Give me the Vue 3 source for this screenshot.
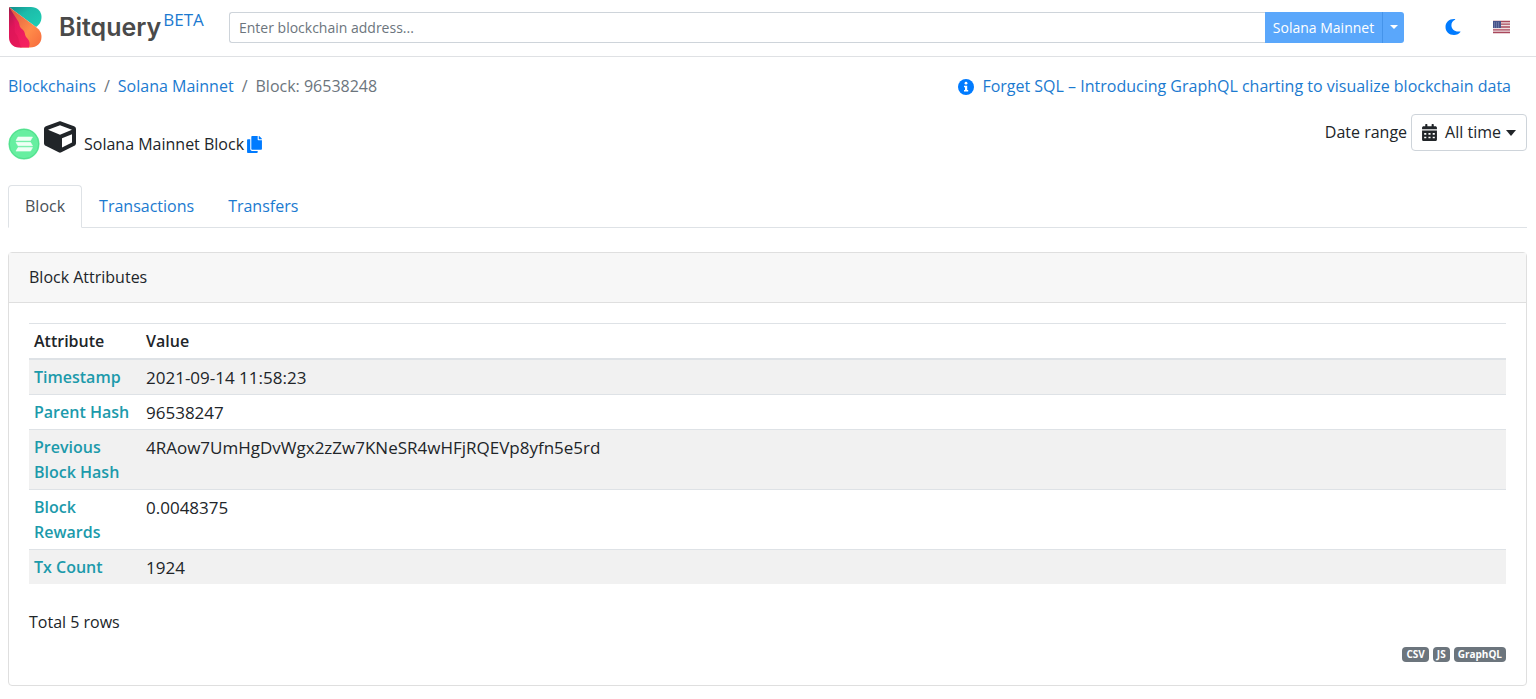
<script setup>
import { ref } from 'vue'

const query = ref('')
const tabs = ['Block', 'Transactions', 'Transfers']
const activeTab = ref('Block')
const rows = [
  { name: 'Timestamp', value: '2021-09-14 11:58:23' },
  { name: 'Parent Hash', value: '96538247' },
  { name: 'Previous Block Hash', value: '4RAow7UmHgDvWgx2zZw7KNeSR4wHFjRQEVp8yfn5e5rd' },
  { name: 'Block Rewards', value: '0.0048375' },
  { name: 'Tx Count', value: '1924' },
]
const formats = ['CSV', 'JS', 'GraphQL']
</script>

<template>
  <div class="page">
    <header class="topbar">
      <a class="brand" href="#" aria-label="Bitquery beta">
        <svg class="logo" viewBox="0 0 34 42" aria-hidden="true">
          <defs>
            <linearGradient id="teal" x1="0" y1="0" x2="1" y2="1">
              <stop offset="0" stop-color="#138c8c" />
              <stop offset="0.4" stop-color="#1cbcaa" />
              <stop offset="1" stop-color="#1fd0b4" />
            </linearGradient>
            <linearGradient id="orange" x1="0" y1="0" x2="1" y2="1">
              <stop offset="0" stop-color="#d9543f" />
              <stop offset="0.6" stop-color="#ff8c4a" />
              <stop offset="1" stop-color="#f76a3c" />
            </linearGradient>
            <linearGradient id="pink" x1="0" y1="0" x2="0.7" y2="1">
              <stop offset="0" stop-color="#8e1f48" />
              <stop offset="0.4" stop-color="#e3185e" />
              <stop offset="1" stop-color="#f5205f" />
            </linearGradient>
          </defs>
          <path d="M1 1H23C29 1 33.500 5 33.500 11C33.500 16 31 19 28 21L1 1Z" fill="url(#teal)" />
          <path d="M1 1L28 21C32 24 33.500 27 33.500 31C33.500 37 29 41.500 22 41.500H12L1 1Z" fill="url(#orange)" />
          <path d="M1 1L10 15C12 18 11 21 14 23C18 26 16 29 19 32C22 35 22 38 21 41.500H11C5 41.500 1 37 1 31Z" fill="url(#pink)" />
          <path d="M1 4L6 16C8 21 5 24 8 28C12 33 10 37 14 41.500H11C5 41.500 1 37 1 31Z" fill="#d3104f" opacity="0.35" />
        </svg>
        <span class="brand-name">Bitquery</span>
        <span class="beta">BETA</span>
      </a>
      <form class="search" @submit.prevent>
        <input v-model="query" type="text" aria-label="Blockchain address" placeholder="Enter blockchain address..." />
        <button class="network" type="submit">Solana Mainnet</button>
        <button class="network-toggle" type="button" aria-label="Choose network"><span class="caret"></span></button>
      </form>
      <button class="icon-button" type="button" aria-label="Dark mode">
        <svg width="16" height="18" viewBox="0 0 16 18" aria-hidden="true">
          <path d="M9 1C4 1 0.500 4.500 0.500 9S4 17 9 17C11.800 17 14 15.900 15.400 14C15.700 13.600 15.300 13.300 14.900 13.400C10 14.300 6.400 11.200 6.400 7.300C6.400 4.800 7.700 2.800 9.900 1.700C10.400 1.400 10.300 1.100 9.900 1Z" fill="#007bff" />
        </svg>
      </button>
      <button class="icon-button" type="button" aria-label="Language: English">
        <svg width="17" height="14" viewBox="0 0 17 14" aria-hidden="true">
          <rect y="1" width="17" height="12" rx="1" fill="#eedfe2" />
          <path d="M0 1.500H17M0 4.200H17M0 7H17M0 9.800H17M0 12.500H17" stroke="#a9485c" stroke-width="1.300" />
          <rect y="1" width="8" height="7" fill="#46538a" />
          <path d="M1 3H7M1 5H7M1 7H7" stroke="#aab3d0" stroke-width="0.700" stroke-dasharray="1 1" />
        </svg>
      </button>
    </header>

    <main class="content">
      <div class="crumb-row">
        <nav class="crumbs" aria-label="Breadcrumb">
          <a href="#">Blockchains</a><span class="sep">/</span><a href="#">Solana Mainnet</a><span class="sep">/</span><span>Block: 96538248</span>
        </nav>
        <a class="news" href="#">
          <svg width="16" height="16" viewBox="0 0 16 16" aria-hidden="true">
            <circle cx="8" cy="8" r="8" fill="#007bff" />
            <circle cx="8" cy="4.200" r="1.400" fill="#fff" />
            <path d="M6 6.800H9.200V11H10.200V12.400H6V11H7V8.200H6Z" fill="#fff" />
          </svg>
          <span>Forget SQL – Introducing GraphQL charting to visualize blockchain data</span>
        </a>
      </div>

      <div class="title-row">
        <h1 class="title">
          <svg class="coin" width="32" height="32" viewBox="0 0 32 32" aria-hidden="true">
            <circle cx="16" cy="16" r="15.500" fill="#66efa0" />
            <circle cx="16" cy="16" r="14.700" fill="none" stroke="#52dd8d" />
            <path d="M10 9H24.500L22.500 12.500H8ZM8 14.300H22.500L24.500 17.800H10ZM10 19.600H24.500L22.500 23.100H8Z" fill="#effff5" stroke="#effff5" stroke-width="0.600" stroke-linejoin="round" />
          </svg>
          <svg class="cube" width="32" height="32" viewBox="0 0 512 512" aria-hidden="true">
            <path d="M239.100 6.300l-208 78c-18.700 7-31.100 25-31.100 45v225.100c0 18.200 10.300 34.800 26.500 42.900l208 104c13.500 6.800 29.400 6.800 42.900 0l208-104c16.300-8.100 26.500-24.800 26.500-42.900V129.300c0-20-12.400-37.900-31.100-44.900l-208-78C262 2.200 250 2.200 239.100 6.300zM256 68.400l192 72v1.100l-192 78-192-78v-1.100l192-72zm32 356V275.500l160-65v133.900l-160 80z" fill="#212529" />
          </svg>
          <span>Solana Mainnet Block</span>
          <button class="copy" type="button" aria-label="Copy">
            <svg width="15" height="17" viewBox="0 0 448 512" aria-hidden="true">
              <path d="M320 448v40c0 13.300-10.700 24-24 24H24c-13.300 0-24-10.700-24-24V120c0-13.300 10.700-24 24-24h72v296c0 30.900 25.100 56 56 56h168zm0-344V0H152c-13.300 0-24 10.700-24 24v368c0 13.300 10.700 24 24 24h272c13.300 0 24-10.700 24-24V128H344c-13.200 0-24-10.800-24-24zm121-31L375 7A24 24 0 0 0 358.100 0H352v96h96v-6.100a24 24 0 0 0-7-17z" fill="#007bff" />
            </svg>
          </button>
        </h1>
        <div class="range">
          <span id="range-label">Date range</span>
          <button class="range-button" type="button" aria-describedby="range-label">
            <svg width="15" height="17" viewBox="0 0 448 512" aria-hidden="true">
              <path d="M0 464c0 26.500 21.500 48 48 48h352c26.500 0 48-21.500 48-48V192H0v272zm64-192h64v48H64zm128 0h64v48h-64zm128 0h64v48h-64zM64 384h64v48H64zm128 0h64v48h-64zm128 0h64v48h-64zM400 64h-48V16c0-8.800-7.200-16-16-16h-32c-8.800 0-16 7.200-16 16v48H160V16c0-8.800-7.200-16-16-16h-32c-8.800 0-16 7.200-16 16v48H48C21.500 64 0 85.500 0 112v48h448v-48c0-26.500-21.500-48-48-48z" fill="#212529" fill-rule="evenodd" />
            </svg>
            <span>All time</span>
            <span class="caret"></span>
          </button>
        </div>
      </div>

      <nav class="tabs" aria-label="Sections">
        <a v-for="tab in tabs" :key="tab" href="#" :class="{ active: tab === activeTab }" @click.prevent="activeTab = tab">{{ tab }}</a>
      </nav>

      <section class="card">
        <h2 class="card-header">Block Attributes</h2>
        <div class="card-body">
          <table>
            <thead>
              <tr><th scope="col">Attribute</th><th scope="col">Value</th></tr>
            </thead>
            <tbody>
              <tr v-for="row in rows" :key="row.name">
                <th scope="row">{{ row.name }}</th>
                <td>{{ row.value }}</td>
              </tr>
            </tbody>
          </table>
          <p class="total">Total 5 rows</p>
          <div class="formats">
            <a v-for="format in formats" :key="format" href="#">{{ format }}</a>
          </div>
        </div>
      </section>
    </main>
  </div>
</template>

<style>
body {
  margin: 0;
  background: #fff;
}
</style>

<style scoped>
.page {
  font-family: "Open Sans", "Noto Sans", sans-serif;
  font-size: 16px;
  line-height: 25px;
  color: #212529;
}
.page *,
.page *::before {
  box-sizing: border-box;
}
a {
  color: #1b7ad0;
  text-decoration: none;
}
button,
input {
  font: inherit;
  color: inherit;
}
button {
  padding: 0;
  border: 0;
  background: none;
  cursor: pointer;
}
svg {
  display: block;
  flex: none;
}
.topbar {
  display: flex;
  align-items: center;
  height: 57px;
  padding: 0 26px 2px 8px;
  border-bottom: 1px solid #dfe1e4;
}
.brand {
  display: flex;
  align-items: center;
  width: 221px;
}
.logo {
  width: 34px;
  height: 42px;
}
.brand-name {
  margin-left: 17px;
  font-family: Inter, sans-serif;
  font-size: 25px;
  font-weight: 600;
  line-height: 32px;
  color: #4a4a4a;
}
.beta {
  margin: 0 0 16px 2px;
  font-size: 17px;
}
.search {
  display: flex;
  flex: 1;
  height: 31px;
  margin-right: 41px;
  font-size: 14px;
}
.search input {
  flex: 1;
  min-width: 0;
  padding: 0 9px;
  border: 1px solid #ced4da;
  border-right: 0;
  border-radius: 3px 0 0 3px;
  background: #fff;
}
.search input::placeholder {
  color: #6c757d;
  opacity: 1;
}
.network,
.network-toggle {
  background: #5aa7fb;
  color: #fff;
}
.network {
  width: 117px;
  white-space: nowrap;
}
.network-toggle {
  display: flex;
  align-items: center;
  justify-content: center;
  width: 22px;
  border-left: 1px solid #4594ea;
  border-radius: 0 3px 3px 0;
}
.caret {
  border: 4px solid transparent;
  border-top-color: currentColor;
  border-bottom: 0;
}
.icon-button + .icon-button {
  margin-left: 32px;
}
.content {
  padding: 17px 9px 0 8px;
}
.crumb-row,
.title-row {
  display: flex;
  justify-content: space-between;
}
.crumbs {
  color: #6c757d;
}
.sep {
  margin: 0 8px;
}
.news {
  display: flex;
  align-items: center;
  gap: 8px;
  margin-right: 16px;
}
.title-row {
  align-items: flex-start;
  margin-top: 15px;
}
.title {
  display: flex;
  align-items: center;
  margin: 7px 0 0;
  font-size: 16px;
  font-weight: 400;
}
.cube {
  margin: 0 8px 14px 4px;
}
.copy {
  margin-left: 3px;
}
.range {
  display: flex;
  align-items: center;
  gap: 4px;
}
.range-button {
  display: flex;
  align-items: center;
  height: 37px;
  padding: 0 10px;
  border: 1px solid #ced4da;
  border-radius: 4px;
}
.range-button svg {
  margin-right: 8px;
}
.range-button .caret {
  margin-left: 5px;
  border-width: 6px 5px 0;
}
.tabs {
  display: flex;
  margin-top: 18px;
  border-bottom: 1px solid #dee2e6;
}
.tabs a {
  margin-bottom: -1px;
  padding: 8px 16px;
  border: 1px solid transparent;
  border-radius: 4px 4px 0 0;
}
.tabs a.active {
  border-color: #dee2e6 #dee2e6 #fff;
  background: #fff;
  color: #495057;
}
.card {
  margin-top: 24px;
  border: 1px solid #dfdfdf;
  border-radius: 4px;
}
.card-header {
  margin: 0;
  padding: 12px 20px;
  border-bottom: 1px solid #dfdfdf;
  background: #f7f7f7;
  font-size: 16px;
  font-weight: 400;
}
.card-body {
  padding: 20px 20px 23px;
}
table {
  width: 100%;
  border-spacing: 0;
}
th,
td {
  padding: 5px 5px 4px;
  border-top: 1px solid #dee2e6;
  text-align: left;
  vertical-align: top;
}
th {
  font-weight: 600;
}
td {
  font-size: 17px;
}
th:first-child {
  width: 112px;
}
thead th {
  border-bottom: 1px solid #dee2e6;
}
tbody th {
  color: #1c9aab;
}
tbody tr:nth-child(odd) {
  background: #f1f1f1;
}
.total {
  margin: 26px 0 12px;
}
.formats {
  display: flex;
  justify-content: flex-end;
  gap: 4px;
}
.formats a {
  padding: 0 4px;
  border-radius: 4px;
  background: #6c757d;
  color: #fff;
  font-size: 10px;
  font-weight: 700;
  line-height: 15px;
}
</style>
